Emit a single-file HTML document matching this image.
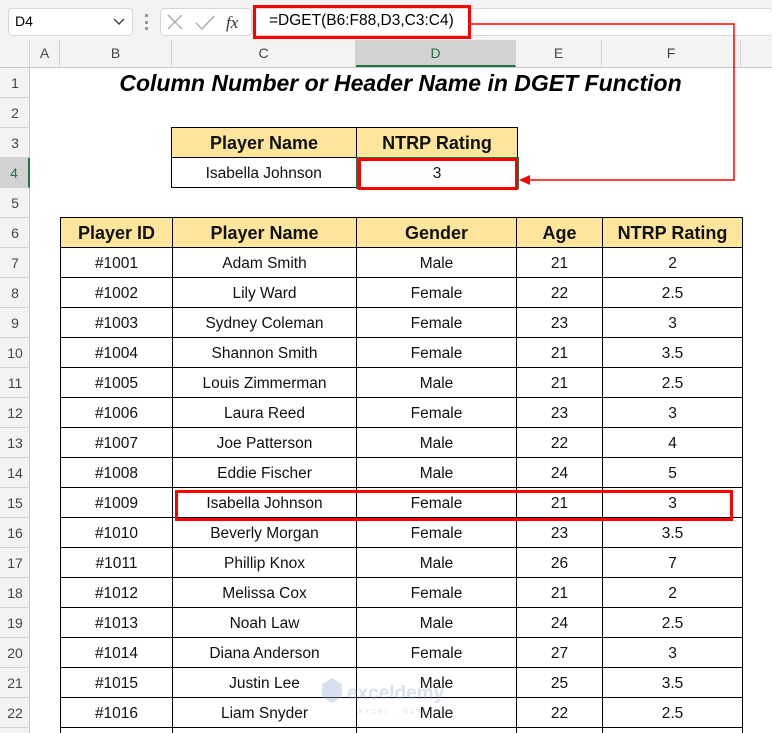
<!DOCTYPE html>
<html><head><meta charset="utf-8"><style>
*{margin:0;padding:0;box-sizing:border-box}
html,body{width:772px;height:733px;overflow:hidden}
body{background:#fff;font-family:"Liberation Sans",Calibri,sans-serif;position:relative}
.a{position:absolute}
.top{left:0;top:0;width:772px;height:40px;background:#f3f3f3}
.box{background:#fff;border:1px solid #d6d6d6;border-radius:4px}
.colh{left:0;top:40px;width:772px;height:28px;background:#f3f3f3;border-bottom:1px solid #c8c8c8}
.ch{position:absolute;top:0;height:27px;line-height:27px;text-align:center;font-size:14px;color:#444;border-right:1px solid #d4d4d4}
.rowh{left:0;top:68px;width:30px;height:665px;background:#f3f3f3;border-right:1px solid #c8c8c8}
.rh{position:absolute;left:0;width:30px;height:30px;line-height:30px;text-align:center;font-size:14px;color:#444;border-bottom:1px solid #d4d4d4}
table{border-collapse:collapse;table-layout:fixed;position:absolute;font-family:"Liberation Sans",Calibri,sans-serif}
td{border:1px solid #000;height:30px;text-align:center;font-size:15.5px;color:#111;padding:2px 0 0 0;white-space:nowrap}
th{border:1px solid #000;height:30px;background:#fde59b;font-size:18px;font-weight:bold;color:#111;padding-top:2px}
</style></head><body>
<div class="a top"></div>
<div class="a box" style="left:8px;top:8px;width:125px;height:28px"></div>
<div class="a" style="left:15px;top:13px;font-size:14px">D4</div>
<svg class="a" style="left:112px;top:17px" width="14" height="10"><path d="M2 2 L7 7 L12 2" stroke="#444" stroke-width="1.5" fill="none"/></svg>
<div class="a" style="left:145px;top:14px;width:3px;height:16px;border-left:3px dotted #999"></div>
<div class="a box" style="left:160px;top:8px;width:92px;height:28px"></div>
<svg class="a" style="left:166px;top:13px" width="80" height="20"><path d="M2 2 L16 16 M16 2 L2 16" stroke="#aaa" stroke-width="1.3"/><path d="M30 10 L36 16 L48 3" stroke="#aaa" stroke-width="1.3" fill="none"/><text x="60" y="15" font-family="Liberation Serif" font-style="italic" font-size="17" fill="#333">fx</text></svg>
<div class="a box" style="left:252px;top:8px;width:520px;height:28px;border-right:none"></div>
<div class="a" style="left:253px;top:5px;width:218px;height:34px;border:3px solid #f00"></div>
<div class="a" style="left:269px;top:12px;font-size:15.5px">=DGET(B6:F88,D3,C3:C4)</div>

<div class="a colh">
<div class="ch" style="left:0;width:30px"></div>
<div class="ch" style="left:30px;width:30px">A</div>
<div class="ch" style="left:60px;width:112px">B</div>
<div class="ch" style="left:172px;width:184px">C</div>
<div class="ch" style="left:356px;width:160px;background:#d2d2d2;color:#217346;border-bottom:2px solid #217346">D</div>
<div class="ch" style="left:516px;width:86px">E</div>
<div class="ch" style="left:602px;width:139px">F</div>
</div>
<div class="a rowh">
<div class="rh" style="top:0">1</div><div class="rh" style="top:30px">2</div><div class="rh" style="top:60px">3</div>
<div class="rh" style="top:90px;background:#d2d2d2;color:#217346;border-right:2px solid #217346">4</div>
<div class="rh" style="top:120px">5</div><div class="rh" style="top:150px">6</div><div class="rh" style="top:180px">7</div><div class="rh" style="top:210px">8</div><div class="rh" style="top:240px">9</div><div class="rh" style="top:270px">10</div><div class="rh" style="top:300px">11</div><div class="rh" style="top:330px">12</div><div class="rh" style="top:360px">13</div><div class="rh" style="top:390px">14</div><div class="rh" style="top:420px">15</div><div class="rh" style="top:450px">16</div><div class="rh" style="top:480px">17</div><div class="rh" style="top:510px">18</div><div class="rh" style="top:540px">19</div><div class="rh" style="top:570px">20</div><div class="rh" style="top:600px">21</div><div class="rh" style="top:630px">22</div><div class="rh" style="top:660px">23</div>
</div>

<div class="a" style="left:60px;top:68px;width:681px;height:30px;line-height:30px;text-align:center;font-size:23px;font-weight:bold;font-style:italic">Column Number or Header Name in DGET Function</div>

<table style="left:171px;top:127px;width:346px">
<colgroup><col style="width:185px"><col style="width:161px"></colgroup>
<tr><th>Player Name</th><th>NTRP Rating</th></tr>
<tr><td>Isabella Johnson</td><td style="border:2px solid #217346">3</td></tr>
</table>
<div class="a" style="left:358px;top:158px;width:160px;height:32px;border:3px solid #f00"></div>

<table style="left:60px;top:217px;width:682px">
<colgroup><col style="width:112px"><col style="width:184px"><col style="width:160px"><col style="width:86px"><col style="width:140px"></colgroup>
<tr><th>Player ID</th><th>Player Name</th><th>Gender</th><th>Age</th><th>NTRP Rating</th></tr>
<tr><td>#1001</td><td>Adam Smith</td><td>Male</td><td>21</td><td>2</td></tr>
<tr><td>#1002</td><td>Lily Ward</td><td>Female</td><td>22</td><td>2.5</td></tr>
<tr><td>#1003</td><td>Sydney Coleman</td><td>Female</td><td>23</td><td>3</td></tr>
<tr><td>#1004</td><td>Shannon Smith</td><td>Female</td><td>21</td><td>3.5</td></tr>
<tr><td>#1005</td><td>Louis Zimmerman</td><td>Male</td><td>21</td><td>2.5</td></tr>
<tr><td>#1006</td><td>Laura Reed</td><td>Female</td><td>23</td><td>3</td></tr>
<tr><td>#1007</td><td>Joe Patterson</td><td>Male</td><td>22</td><td>4</td></tr>
<tr><td>#1008</td><td>Eddie Fischer</td><td>Male</td><td>24</td><td>5</td></tr>
<tr><td>#1009</td><td>Isabella Johnson</td><td>Female</td><td>21</td><td>3</td></tr>
<tr><td>#1010</td><td>Beverly Morgan</td><td>Female</td><td>23</td><td>3.5</td></tr>
<tr><td>#1011</td><td>Phillip Knox</td><td>Male</td><td>26</td><td>7</td></tr>
<tr><td>#1012</td><td>Melissa Cox</td><td>Female</td><td>21</td><td>2</td></tr>
<tr><td>#1013</td><td>Noah Law</td><td>Male</td><td>24</td><td>2.5</td></tr>
<tr><td>#1014</td><td>Diana Anderson</td><td>Female</td><td>27</td><td>3</td></tr>
<tr><td>#1015</td><td>Justin Lee</td><td>Male</td><td>25</td><td>3.5</td></tr>
<tr><td>#1016</td><td>Liam Snyder</td><td>Male</td><td>22</td><td>2.5</td></tr>
<tr><td></td><td></td><td></td><td></td><td></td></tr>
</table>
<div class="a" style="left:175px;top:490px;width:558px;height:31px;border:3px solid #f00"></div>

<svg class="a" style="left:0;top:0" width="772" height="733">
<path d="M470 24 H734 V180 H528" stroke="#f00" stroke-width="1.5" fill="none"/>
<path d="M519 180 L530 175 L530 185 Z" fill="#f00"/>
<g opacity="0.35"><path d="M322 684 L332 678 L342 684 L342 697 L332 703 L322 697 Z" fill="#8fa6d8"/>
<text x="347" y="699" font-family="Liberation Sans" font-size="19" font-weight="bold" fill="#8fa6d8">exceldemy</text>
<text x="358" y="714" font-family="Liberation Sans" font-size="7" fill="#8fa6d8" letter-spacing="2">EXCEL · DATA · BI</text></g>
</svg>
</body></html>
